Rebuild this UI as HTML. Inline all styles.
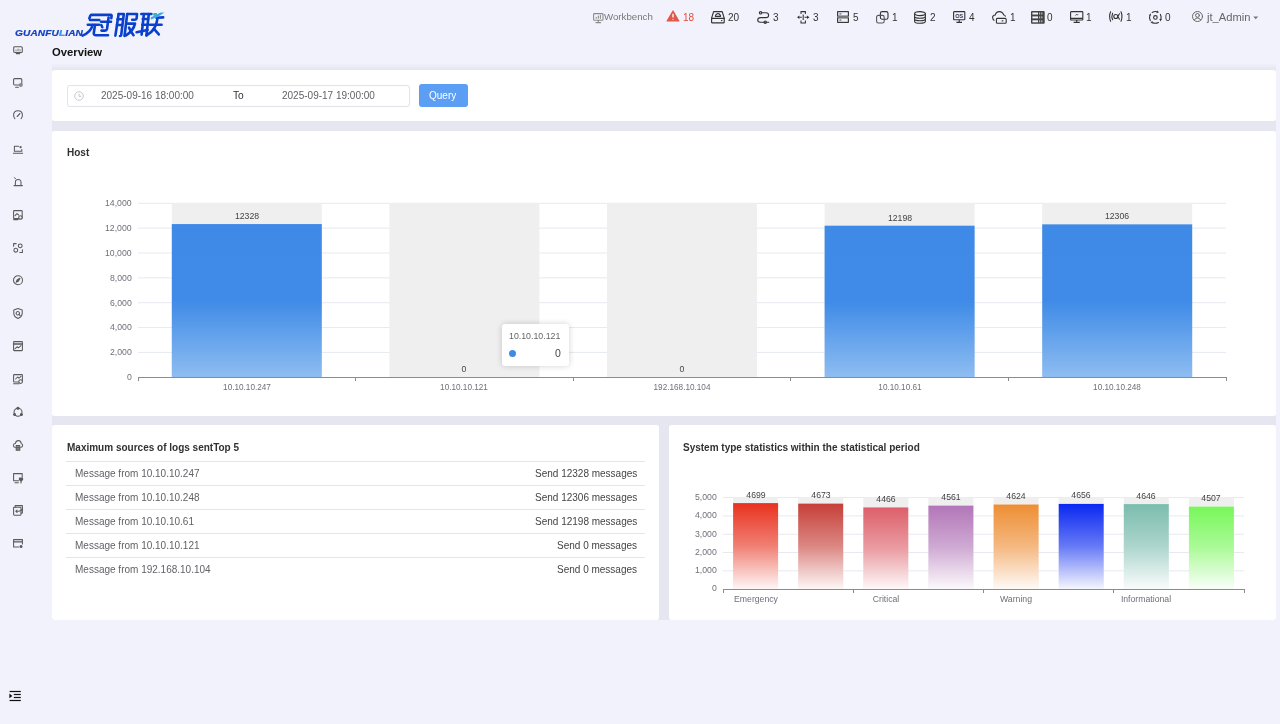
<!DOCTYPE html><html><head><meta charset="utf-8"><style>
html,body{margin:0;padding:0;width:1280px;height:724px;overflow:hidden;background:#f2f2fc;font-family:"Liberation Sans",sans-serif;}
.a{position:absolute;}
.t{position:absolute;white-space:nowrap;line-height:1;will-change:transform;}
svg{position:absolute;overflow:visible;}
</style></head><body>
<div class="t" style="left:15px;top:28.6px;font-size:8.8px;font-weight:bold;font-style:italic;color:#1442c2;transform-origin:0 0;transform:scaleX(1.15);letter-spacing:0.1px;-webkit-text-stroke:0.2px #1442c2">GUANFU<span style="color:#3aa2f2">L</span>IAN</div>
<svg style="left:0;top:0" width="180" height="45" viewBox="0 0 180 45">
<g fill="none" stroke="#0a40cc" stroke-width="2.6" stroke-linecap="round" stroke-linejoin="round">
<path d="M89.3 18.4 L90.4 15.6 Q90.8 14.9 91.8 14.9 L110.8 14.9 Q111.8 14.9 111.6 16 L111.3 18.2"/>
<path d="M90 20 L99.3 20"/><path d="M87.8 24.8 L99 24.8"/>
<path d="M92.6 25 Q91 32 82.5 35.6"/>
<path d="M95 25 L93.8 33 Q93.6 35.2 96 35.2 L108 35.2"/>
<path d="M101 21.7 L111 21.7"/><path d="M108.6 17.5 L107 29 Q106.6 30.6 105 30.6 L101.5 30.6"/><path d="M101.3 25 L102.3 27.2"/>
<path d="M118.6 14 L115.4 35.6"/><path d="M118.6 14 L123.8 14 L121.2 35.2 Q121 36 120 36"/><path d="M117.6 19.3 L122.8 19.3"/><path d="M117 25 L122 25"/>
<path d="M127.2 14 L124.5 36"/><path d="M127.2 14 L137 14 L136.6 18.5 Q136.5 19.8 135 19.8 L132.2 19.8"/>
<path d="M127.6 23.6 L135 23.6 Q133.5 30.5 126 35.4"/><path d="M129 27.6 Q131 32 133.5 35.2"/>
<path d="M141.3 14 L151.4 14"/><path d="M143.9 14 L141.6 34.6"/><path d="M148.8 14 L146.4 35.4"/><path d="M142.8 19 L148.2 19"/><path d="M142.3 24.8 L147.6 24.8"/><path d="M136.6 32.2 L147.6 30"/>
<path d="M149.8 24.8 L161.6 24.8"/><path d="M157.3 19.5 Q156 30 146.6 35.4"/><path d="M153.8 28.6 L158.8 34.4"/><path d="M156.6 17.8 L163.2 17.4"/>
</g>
<path d="M153.4 13 L157 13 L156.6 15.8 L153.2 15.8 Z" fill="#2bbf8c"/>
<path d="M150.6 17.4 L160.5 12.6 L164.5 12.6 Q158 17.8 151 19.5 Z" fill="#3aa8f0"/>
</svg>
<svg style="left:592.5px;top:13.0px" width="11" height="11" viewBox="0 0 11 11"><g fill="none" stroke="#8a8a8a" stroke-width="1.1" stroke-linecap="round" stroke-linejoin="round"><rect x="0.6" y="0.6" width="9.4" height="6.6" rx="0.8"/><path d="M3 9.6 L7.6 9.6 M5.3 7.2 L5.3 9.6 M3.2 5.3 L3.2 4.3 M5.3 5.3 L5.3 3 M7.4 5.3 L7.4 2.4"/></g></svg>
<div class="t" style="left:604.2px;top:12.4px;font-size:9.70px;color:#777;font-weight:normal;">Workbench</div>
<svg style="left:665.5px;top:10px" width="14" height="12" viewBox="0 0 14 12"><path d="M6.6 0.6 Q7 0 7.4 0.6 L13.5 11 Q13.7 11.6 13 11.6 L1 11.6 Q0.3 11.6 0.5 11 Z" fill="#e0574b"/><path d="M7 3.8 L7 7.6 M7 9.1 L7 9.8" stroke="#fff" stroke-width="1.3"/></svg>
<div class="t" style="left:683.0px;top:12.5px;font-size:10.00px;color:#e8483b;font-weight:normal;">18</div>
<svg style="left:711.0px;top:10.8px" width="14" height="13" viewBox="0 0 14 13"><g fill="none" stroke="#333" stroke-width="1.15" stroke-linecap="round" stroke-linejoin="round"><path d="M2.6 0.6 L11.2 0.6 L13.2 7.2 L13.2 11.3 Q13.2 11.8 12.7 11.8 L1.1 11.8 Q0.6 11.8 0.6 11.3 L0.6 7.2 Z"/><path d="M0.6 7.4 L13.2 7.4"/><path d="M4.4 5.3 Q4.4 3.5 5.6 3.5 Q6.2 2.2 7.4 2.6 Q8.4 2.6 8.6 3.6 Q9.6 3.8 9.6 5.3 Z"/><path d="M10.6 9.6 L10.8 9.6" stroke-width="1.4"/></g></svg>
<div class="t" style="left:727.6px;top:12.5px;font-size:10.00px;color:#333;font-weight:normal;">20</div>
<svg style="left:757.0px;top:11.0px" width="13" height="13" viewBox="0 0 13 13"><g fill="none" stroke="#333" stroke-width="1.1" stroke-linecap="round" stroke-linejoin="round"><circle cx="3.6" cy="1.8" r="1.2"/><path d="M4.8 1.8 L9 1.8 Q11.6 1.8 11.6 4.2 Q11.6 6.6 9 6.6 L3.6 6.6 Q0.7 6.6 0.7 9 Q0.7 11.2 3.4 11.2 L11.8 11.2"/><circle cx="8.2" cy="11.2" r="1.2"/></g></svg>
<div class="t" style="left:773.0px;top:12.5px;font-size:10.00px;color:#333;font-weight:normal;">3</div>
<svg style="left:797px;top:10.5px" width="13" height="13" viewBox="0 0 13 13"><g fill="none" stroke="#333" stroke-width="1.05"><path d="M4 3 L4 0.6 L8.4 0.6 L8.4 3 M4 9.6 L4 12 L8.4 12 L8.4 9.6 M6.2 3.6 L6.2 9"/><path d="M2.2 6.3 L4.8 6.3 M7.6 6.3 L10.2 6.3"/></g><path d="M0 6.3 L2.4 4.6 L2.4 8 Z M12.4 6.3 L10 4.6 L10 8 Z" fill="#333"/></svg>
<div class="t" style="left:813.2px;top:12.5px;font-size:10.00px;color:#333;font-weight:normal;">3</div>
<svg style="left:837px;top:11px" width="12" height="12" viewBox="0 0 12 12"><rect x="0" y="0" width="12" height="12" rx="0.8" fill="#3a3a3a"/><rect x="1.2" y="1.2" width="9.6" height="3.4" fill="#f2f2fc"/><rect x="1.2" y="7.4" width="9.6" height="3.4" fill="#f2f2fc"/><rect x="0" y="5.2" width="12" height="1.6" fill="#8a8a8a"/><path d="M2.4 2.9 L4.4 2.9 M2.4 9.1 L4.4 9.1" stroke="#333" stroke-width="0.9"/></svg>
<div class="t" style="left:853.2px;top:12.5px;font-size:10.00px;color:#333;font-weight:normal;">5</div>
<svg style="left:875.5px;top:11px" width="13" height="13" viewBox="0 0 13 13"><g fill="none" stroke-width="1.1"><rect x="4.4" y="0.6" width="7.6" height="7.6" rx="1.8" stroke="#333"/><rect x="0.6" y="4.4" width="7.6" height="7.6" rx="1.8" stroke="#555"/></g></svg>
<div class="t" style="left:892.3px;top:12.5px;font-size:10.00px;color:#333;font-weight:normal;">1</div>
<svg style="left:913.8px;top:11px" width="12" height="13" viewBox="0 0 12 13"><g fill="none" stroke="#333" stroke-width="1.1"><ellipse cx="6" cy="2.6" rx="5.4" ry="2"/><path d="M0.6 2.6 L0.6 10.2 Q0.6 12.3 6 12.3 Q11.4 12.3 11.4 10.2 L11.4 2.6 M0.6 5.2 Q0.6 7.2 6 7.2 Q11.4 7.2 11.4 5.2 M0.6 7.8 Q0.6 9.8 6 9.8 Q11.4 9.8 11.4 7.8"/></g></svg>
<div class="t" style="left:929.5px;top:12.5px;font-size:10.00px;color:#333;font-weight:normal;">2</div>
<svg style="left:953px;top:11px" width="13" height="12" viewBox="0 0 13 12"><g fill="none" stroke="#333" stroke-width="1.1"><rect x="0.6" y="0.6" width="11.2" height="8.2" rx="0.6"/><path d="M6.2 8.8 L6.2 11.2 M3.4 11.4 L9 11.4"/></g><text x="6.2" y="6.6" font-size="5.4" font-weight="bold" text-anchor="middle" fill="#333" font-family="Liberation Sans">OS</text></svg>
<div class="t" style="left:968.7px;top:12.5px;font-size:10.00px;color:#333;font-weight:normal;">4</div>
<svg style="left:991.6px;top:10.6px" width="15" height="13" viewBox="0 0 15 13"><g fill="none" stroke="#333" stroke-width="1.1"><path d="M2.4 9.4 Q0.6 8.6 0.6 6.6 Q0.6 4.2 3.2 4 Q4 0.6 7.4 0.6 Q10.6 0.6 11.6 3.8 Q13.2 4.4 13.6 5.6"/><rect x="4.4" y="7.4" width="9.8" height="4.9" rx="1"/></g><path d="M9.6 9.85 L11.4 9.85" stroke="#333" stroke-width="1.1"/></svg>
<div class="t" style="left:1009.6px;top:12.5px;font-size:10.00px;color:#333;font-weight:normal;">1</div>
<svg style="left:1031px;top:10.6px" width="14" height="13" viewBox="0 0 14 13"><rect x="0" y="0" width="13.7" height="12.8" rx="1" fill="#444"/><g fill="#f2f2fc"><rect x="1.4" y="1.5" width="5.6" height="2"/><rect x="1.4" y="5.4" width="5.6" height="2"/><rect x="1.4" y="9.3" width="5.6" height="2"/></g><g fill="#bbb"><rect x="8" y="1.5" width="1.2" height="2"/><rect x="10.2" y="1.5" width="1.2" height="2"/><rect x="8" y="5.4" width="1.2" height="2"/><rect x="10.2" y="5.4" width="1.2" height="2"/><rect x="8" y="9.3" width="1.2" height="2"/><rect x="10.2" y="9.3" width="1.2" height="2"/></g></svg>
<div class="t" style="left:1047.3px;top:12.5px;font-size:10.00px;color:#333;font-weight:normal;">0</div>
<svg style="left:1069.7px;top:10.9px" width="14" height="12" viewBox="0 0 14 12"><g fill="none" stroke="#333" stroke-width="1.1"><rect x="0.6" y="0.6" width="12.2" height="8.4" rx="0.6"/><path d="M0.6 7.4 L12.8 7.4 M6.7 9 L6.7 11.2 M3.6 11.4 L9.8 11.4"/><path d="M5.2 4.6 L6.4 3.4 L7.2 4.2 L8.2 3" stroke-width="0.8"/></g></svg>
<div class="t" style="left:1086.4px;top:12.5px;font-size:10.00px;color:#333;font-weight:normal;">1</div>
<svg style="left:1108.8px;top:11.2px" width="14" height="12" viewBox="0 0 14 12"><g fill="none" stroke="#333" stroke-width="1.1" stroke-linecap="round"><path d="M1.6 0.8 Q-0.4 5.5 1.6 10.2 M3.6 2.2 Q2.2 5.5 3.6 8.8"/><path d="M12 0.8 Q14 5.5 12 10.2"/><circle cx="6.8" cy="5.5" r="2"/><path d="M8.8 5.5 L10.5 2.8 M8.8 5.5 L10.5 8.2"/></g></svg>
<div class="t" style="left:1126.0px;top:12.5px;font-size:10.00px;color:#333;font-weight:normal;">1</div>
<svg style="left:1148.8px;top:10.9px" width="13" height="13" viewBox="0 0 13 13"><g fill="none" stroke="#333" stroke-width="1.1" stroke-linecap="round"><path d="M3.2 1.4 Q5.6 0 8 0.7"/><path d="M11.4 3.4 Q12.8 6 11.8 8.6"/><path d="M9.4 11.4 Q6.6 12.9 3.8 11.8"/><path d="M1.3 9.6 Q0 6.8 0.9 4.4"/><circle cx="6.4" cy="6.4" r="1.8"/></g><g fill="#333"><path d="M8 -0.6 L10 1.2 L7.6 2.2 Z"/><path d="M12.8 8 L11.4 10.4 L10.4 8 Z"/><path d="M3.6 12.8 L1.4 11 L3.9 10.2 Z"/><path d="M0 4.4 L1.4 2.2 L2.2 4.6 Z"/></g></svg>
<div class="t" style="left:1165.3px;top:12.5px;font-size:10.00px;color:#333;font-weight:normal;">0</div>
<svg style="left:1192.3px;top:11.0px" width="11" height="11" viewBox="0 0 11 11"><g fill="none" stroke="#666" stroke-width="1" stroke-linecap="round" stroke-linejoin="round"><circle cx="5.5" cy="5.5" r="5"/><circle cx="5.5" cy="4.4" r="1.9"/><path d="M2.4 9 Q3.2 6.9 5.5 6.9 Q7.8 6.9 8.6 9"/></g></svg>
<div class="t" style="left:1207.2px;top:12.0px;font-size:11.20px;color:#666;font-weight:normal;">jt_Admin</div>
<svg style="left:1252.5px;top:16px" width="6" height="4" viewBox="0 0 6 4"><path d="M0.3 0.5 L5.2 0.5 L2.75 3.2 Z" fill="#777"/></svg>
<svg style="left:12.5px;top:46.2px" width="10" height="11" viewBox="0 0 10 11"><g fill="none" stroke="#5a5a5a" stroke-width="1.05" stroke-linecap="round" stroke-linejoin="round"><rect x="0.7" y="0.7" width="8.6" height="5.8" rx="1"/><path d="M3 5 L3 4 M5 5 L5 3 M7 5 L7 3.6" stroke-width="0.8"/><path d="M3.2 7.6 L6.8 7.6"/></g></svg>
<svg style="left:12.5px;top:78.0px" width="10" height="11" viewBox="0 0 10 11"><g fill="none" stroke="#5a5a5a" stroke-width="1.05" stroke-linecap="round" stroke-linejoin="round"><rect x="0.6" y="0.6" width="8.2" height="6.4" rx="1"/><path d="M2.6 9.2 L5.4 9.2"/><circle cx="7.8" cy="7" r="2" fill="#8a8a8a" stroke="none"/></g></svg>
<svg style="left:12.5px;top:110.0px" width="10" height="11" viewBox="0 0 10 11"><g fill="none" stroke="#5a5a5a" stroke-width="1.05" stroke-linecap="round" stroke-linejoin="round"><path d="M1.9 8.6 Q0.6 7.2 0.6 5.2 Q0.6 0.8 5 0.8 Q9.4 0.8 9.4 5.2 Q9.4 7.2 8.1 8.6"/><path d="M4.3 6.4 L6.8 3.6" stroke-width="1.3"/></g></svg>
<svg style="left:12.5px;top:145.0px" width="10" height="11" viewBox="0 0 10 11"><g fill="none" stroke="#5a5a5a" stroke-width="1.05" stroke-linecap="round" stroke-linejoin="round"><path d="M1.4 1.2 L1.4 6.2 L8.8 6.2 L8.8 4.6 M1.4 1.2 L5.6 1.2 M0.4 8.2 L9.6 8.2"/><circle cx="7.6" cy="2.2" r="1.1" fill="#5a5a5a" stroke="none"/></g></svg>
<svg style="left:12.5px;top:177.0px" width="10" height="11" viewBox="0 0 10 11"><g fill="none" stroke="#5a5a5a" stroke-width="1.05" stroke-linecap="round" stroke-linejoin="round"><path d="M2.4 8 L2.4 5.4 Q2.4 2.4 5.2 2.4 Q8 2.4 8 5.4 L8 8 M1 8.6 L9.4 8.6"/><path d="M2.6 1.6 L1.2 0.6" stroke-width="0.9"/></g></svg>
<svg style="left:12.5px;top:209.6px" width="10" height="11" viewBox="0 0 10 11"><g fill="none" stroke="#5a5a5a" stroke-width="1.05" stroke-linecap="round" stroke-linejoin="round"><rect x="0.6" y="0.6" width="8.6" height="8" rx="0.6"/><path d="M2 5.6 L4 3.6 L5.6 5"/><circle cx="7.4" cy="7.4" r="1.7" fill="#f2f2fc"/><path d="M0.6 9.6 L5 9.6"/></g></svg>
<svg style="left:12.5px;top:243.0px" width="10" height="11" viewBox="0 0 10 11"><g fill="none" stroke="#5a5a5a" stroke-width="1.05" stroke-linecap="round" stroke-linejoin="round"><path d="M0.6 3.2 L0.6 0.6 L3.2 0.6 M9.4 6.8 L9.4 9.4 L6.8 9.4"/><circle cx="7.2" cy="2.8" r="1.9"/><circle cx="2.8" cy="7.2" r="1.9"/></g></svg>
<svg style="left:12.5px;top:275.0px" width="10" height="11" viewBox="0 0 10 11"><g fill="none" stroke="#5a5a5a" stroke-width="1.05" stroke-linecap="round" stroke-linejoin="round"><circle cx="5" cy="5.3" r="4.5"/><path d="M6.9 3.3 L5.6 6 L3.1 7.3 L4.4 4.6 Z" fill="#5a5a5a"/></g></svg>
<svg style="left:12.5px;top:308.0px" width="10" height="11" viewBox="0 0 10 11"><g fill="none" stroke="#5a5a5a" stroke-width="1.05" stroke-linecap="round" stroke-linejoin="round"><path d="M5 0.6 L9.2 2 L9.2 5.6 Q8.8 9 5 10.4 Q1.2 9 0.8 5.6 L0.8 2 Z"/><circle cx="4.8" cy="5.2" r="1.7"/><path d="M6 6.4 L7.2 7.6"/></g></svg>
<svg style="left:12.5px;top:341.0px" width="10" height="11" viewBox="0 0 10 11"><g fill="none" stroke="#5a5a5a" stroke-width="1.05" stroke-linecap="round" stroke-linejoin="round"><rect x="0.6" y="0.6" width="8.8" height="9" rx="0.6"/><path d="M0.6 3 L9.4 3" stroke-width="1.4"/><path d="M1.8 8 L4 5.8 L5.4 6.8 L8 4.6"/></g></svg>
<svg style="left:12.5px;top:374.2px" width="10" height="11" viewBox="0 0 10 11"><g fill="none" stroke="#5a5a5a" stroke-width="1.05" stroke-linecap="round" stroke-linejoin="round"><rect x="0.6" y="0.6" width="8.8" height="7.4" rx="0.6"/><path d="M2.6 5 L4.6 3 L6 4.2 L8 2.4"/><path d="M0.6 9.8 L6 9.8"/><circle cx="7.6" cy="7.6" r="1.8" fill="#f2f2fc"/></g></svg>
<svg style="left:12.5px;top:406.8px" width="10" height="11" viewBox="0 0 10 11"><g fill="none" stroke="#5a5a5a" stroke-width="1.05" stroke-linecap="round" stroke-linejoin="round"><circle cx="5" cy="5.2" r="4"/><circle cx="5" cy="1.2" r="1" fill="#5a5a5a"/><circle cx="1.6" cy="7.4" r="1" fill="#5a5a5a"/><circle cx="8.4" cy="7.4" r="1" fill="#5a5a5a"/></g></svg>
<svg style="left:12.5px;top:439.6px" width="10" height="11" viewBox="0 0 10 11"><g fill="none" stroke="#5a5a5a" stroke-width="1.05" stroke-linecap="round" stroke-linejoin="round"><path d="M2.4 7.4 Q0.4 7.2 0.4 5.2 Q0.6 3.4 2.4 3.4 Q3 0.6 5.4 0.6 Q8 0.8 8.2 3.4 Q9.8 3.8 9.6 5.6 Q9.4 7.2 7.8 7.4"/><path d="M3.2 5.4 L6.8 5.4 L6.8 10.2 L3.2 10.2 Z M3.2 7.8 L6.8 7.8" fill="#8a8a8a"/></g></svg>
<svg style="left:12.5px;top:472.6px" width="10" height="11" viewBox="0 0 10 11"><g fill="none" stroke="#5a5a5a" stroke-width="1.05" stroke-linecap="round" stroke-linejoin="round"><path d="M9.2 4 L9.2 0.6 L0.6 0.6 L0.6 7.8 L5.6 7.8 M2 9.8 L5.4 9.8"/><path d="M6.4 5 L9.6 5 L9.6 6.6 L8.4 8 L7.6 8 L6.4 6.6 Z M8 8 L8 10" fill="#5a5a5a"/></g></svg>
<svg style="left:12.5px;top:505.0px" width="10" height="11" viewBox="0 0 10 11"><g fill="none" stroke="#5a5a5a" stroke-width="1.05" stroke-linecap="round" stroke-linejoin="round"><path d="M2.2 2.2 L2.2 0.6 L9.4 0.6 L9.4 8 L8 8"/><rect x="0.6" y="2.2" width="7.4" height="8" rx="0.6"/><path d="M5.6 6.2 L2.8 6.2 M4 5 L2.8 6.2 L4 7.4 M5.6 6.2 Q8 6.2 9.6 4.2"/></g></svg>
<svg style="left:12.5px;top:539.0px" width="10" height="11" viewBox="0 0 10 11"><g fill="none" stroke="#5a5a5a" stroke-width="1.05" stroke-linecap="round" stroke-linejoin="round"><path d="M9.4 5 L9.4 0.6 L0.6 0.6 L0.6 8 L5.6 8"/><path d="M0.6 2.8 L9.4 2.8" stroke-width="1.2"/><circle cx="8" cy="7.4" r="1.5" fill="#5a5a5a" stroke="none"/></g></svg>
<svg style="left:0;top:0" width="40" height="724"><g fill="#111"><rect x="9.6" y="690.9" width="11.2" height="1.2"/><rect x="13.8" y="693.9" width="7" height="1.2"/><rect x="13.8" y="696.9" width="7" height="1.2"/><rect x="9.6" y="699.9" width="11.2" height="1.2"/><path d="M9.4 693.5 L12.4 695.9 L9.4 698.3 Z"/></g></svg>
<div class="t" style="left:52.0px;top:46.5px;font-size:11.25px;color:#111;font-weight:bold;">Overview</div>
<div class="a" style="left:52px;top:61px;width:1223.5px;height:559px;background:linear-gradient(to bottom,#f2f2fc 0px,#f2f2fc 2px,#e6e6f1 8.5px);overflow:hidden;">
<div class="a" style="left:0px;top:8.5px;width:1223.5px;height:51.5px;background:#fff;border-radius:2.5px;"></div>
<div class="a" style="left:0px;top:69.5px;width:1223.5px;height:285.3px;background:#fff;border-radius:2.5px;"></div>
<div class="a" style="left:0px;top:364px;width:607px;height:195px;background:#fff;border-radius:2.5px;"></div>
<div class="a" style="left:617px;top:364px;width:606.5px;height:195px;background:#fff;border-radius:2.5px;"></div>
</div>
<div class="a" style="left:66.5px;top:84.5px;width:341.5px;height:20.5px;border:1px solid #e1e3e8;border-radius:3px;background:#fff"></div>
<svg style="left:74px;top:90.5px" width="10" height="10" viewBox="0 0 10 10"><g fill="none" stroke="#c0c4cc" stroke-width="0.9"><circle cx="5" cy="5" r="4.3"/><path d="M5 2.5 L5 5.3 L7.3 5.3"/></g></svg>
<div class="t" style="left:101.3px;top:90.7px;font-size:10.00px;color:#606266;font-weight:normal;">2025-09-16 18:00:00</div>
<div class="t" style="left:233.0px;top:90.7px;font-size:10.20px;color:#303133;font-weight:normal;">To</div>
<div class="t" style="left:282.2px;top:90.7px;font-size:10.00px;color:#606266;font-weight:normal;">2025-09-17 19:00:00</div>
<div class="a" style="left:418.5px;top:84px;width:49.5px;height:22.5px;background:#5b9ef4;border-radius:3px"></div>
<div class="t" style="left:429.3px;top:90.6px;font-size:10.00px;color:#fff;font-weight:normal;">Query</div>
<div class="t" style="left:66.5px;top:147.5px;font-size:10.00px;color:#303133;font-weight:bold;">Host</div>
<svg style="left:0;top:0" width="1280" height="724"><rect x="138" y="202.80" width="1088" height="1" fill="#e6e9f0"/><rect x="138" y="227.65" width="1088" height="1" fill="#e6e9f0"/><rect x="138" y="252.50" width="1088" height="1" fill="#e6e9f0"/><rect x="138" y="277.35" width="1088" height="1" fill="#e6e9f0"/><rect x="138" y="302.20" width="1088" height="1" fill="#e6e9f0"/><rect x="138" y="327.05" width="1088" height="1" fill="#e6e9f0"/><rect x="138" y="351.90" width="1088" height="1" fill="#e6e9f0"/><defs><linearGradient id="g1" x1="0" y1="0" x2="0" y2="1"><stop offset="0" stop-color="#3f8ae6"/><stop offset="0.5" stop-color="#3f8be7"/><stop offset="1" stop-color="#8ebdf1"/></linearGradient></defs><rect x="171.8" y="203.30" width="150" height="173.95" fill="#efefef"/><rect x="171.8" y="224.07" width="150" height="153.18" fill="url(#g1)"/><rect x="389.4" y="203.30" width="150" height="173.95" fill="#efefef"/><rect x="607.0" y="203.30" width="150" height="173.95" fill="#efefef"/><rect x="824.6" y="203.30" width="150" height="173.95" fill="#efefef"/><rect x="824.6" y="225.69" width="150" height="151.56" fill="url(#g1)"/><rect x="1042.2" y="203.30" width="150" height="173.95" fill="#efefef"/><rect x="1042.2" y="224.35" width="150" height="152.90" fill="url(#g1)"/><rect x="138" y="377" width="1088" height="1" fill="#8c8c8c"/><rect x="138" y="377" width="1" height="4" fill="#8c8c8c"/><rect x="355" y="377" width="1" height="4" fill="#8c8c8c"/><rect x="573" y="377" width="1" height="4" fill="#8c8c8c"/><rect x="790" y="377" width="1" height="4" fill="#8c8c8c"/><rect x="1008" y="377" width="1" height="4" fill="#8c8c8c"/><rect x="1226" y="377" width="1" height="4" fill="#8c8c8c"/></svg>
<div class="t" style="right:1148px;top:199.1px;font-size:8.7px;color:#6e7079">14,000</div>
<div class="t" style="right:1148px;top:224.0px;font-size:8.7px;color:#6e7079">12,000</div>
<div class="t" style="right:1148px;top:248.8px;font-size:8.7px;color:#6e7079">10,000</div>
<div class="t" style="right:1148px;top:273.7px;font-size:8.7px;color:#6e7079">8,000</div>
<div class="t" style="right:1148px;top:298.5px;font-size:8.7px;color:#6e7079">6,000</div>
<div class="t" style="right:1148px;top:323.4px;font-size:8.7px;color:#6e7079">4,000</div>
<div class="t" style="right:1148px;top:348.2px;font-size:8.7px;color:#6e7079">2,000</div>
<div class="t" style="right:1148px;top:373.1px;font-size:8.7px;color:#6e7079">0</div>
<div class="t" style="left:196.8px;top:211.9px;width:100px;text-align:center;font-size:8.7px;color:#444">12328</div>
<div class="t" style="left:186.8px;top:383.6px;width:120px;text-align:center;font-size:8.2px;color:#6e7079">10.10.10.247</div>
<div class="t" style="left:414.4px;top:365.1px;width:100px;text-align:center;font-size:8.7px;color:#444">0</div>
<div class="t" style="left:404.4px;top:383.6px;width:120px;text-align:center;font-size:8.2px;color:#6e7079">10.10.10.121</div>
<div class="t" style="left:632.0px;top:365.1px;width:100px;text-align:center;font-size:8.7px;color:#444">0</div>
<div class="t" style="left:622.0px;top:383.6px;width:120px;text-align:center;font-size:8.2px;color:#6e7079">192.168.10.104</div>
<div class="t" style="left:849.6px;top:213.5px;width:100px;text-align:center;font-size:8.7px;color:#444">12198</div>
<div class="t" style="left:839.6px;top:383.6px;width:120px;text-align:center;font-size:8.2px;color:#6e7079">10.10.10.61</div>
<div class="t" style="left:1067.2px;top:212.1px;width:100px;text-align:center;font-size:8.7px;color:#444">12306</div>
<div class="t" style="left:1057.2px;top:383.6px;width:120px;text-align:center;font-size:8.2px;color:#6e7079">10.10.10.248</div>
<div class="a" style="left:501.5px;top:323.5px;width:67px;height:42.5px;background:#fff;border-radius:3px;box-shadow:0 0 6px rgba(0,0,0,0.18)"></div>
<div class="t" style="left:509.0px;top:331.5px;font-size:8.80px;color:#666;font-weight:normal;">10.10.10.121</div>
<div class="a" style="left:509px;top:349.5px;width:7px;height:7px;border-radius:50%;background:#3e8be6"></div>
<div class="t" style="left:555.0px;top:347.5px;font-size:10.50px;color:#464646;font-weight:normal;">0</div>
<div class="t" style="left:66.5px;top:443.0px;font-size:10.00px;color:#303133;font-weight:bold;">Maximum sources of logs sentTop 5</div>
<div class="a" style="left:66px;top:461px;width:579px;height:1.2px;background:#e5e5e7"></div>
<div class="t" style="left:75.0px;top:469.0px;font-size:10.00px;color:#606266;font-weight:normal;">Message from 10.10.10.247</div>
<div class="t" style="right:643px;top:469px;font-size:10px;color:#444">Send 12328 messages</div>
<div class="a" style="left:66px;top:485px;width:579px;height:1.2px;background:#e5e5e7"></div>
<div class="t" style="left:75.0px;top:493.0px;font-size:10.00px;color:#606266;font-weight:normal;">Message from 10.10.10.248</div>
<div class="t" style="right:643px;top:493px;font-size:10px;color:#444">Send 12306 messages</div>
<div class="a" style="left:66px;top:509px;width:579px;height:1.2px;background:#e5e5e7"></div>
<div class="t" style="left:75.0px;top:517.0px;font-size:10.00px;color:#606266;font-weight:normal;">Message from 10.10.10.61</div>
<div class="t" style="right:643px;top:517px;font-size:10px;color:#444">Send 12198 messages</div>
<div class="a" style="left:66px;top:533px;width:579px;height:1.2px;background:#e5e5e7"></div>
<div class="t" style="left:75.0px;top:541.0px;font-size:10.00px;color:#606266;font-weight:normal;">Message from 10.10.10.121</div>
<div class="t" style="right:643px;top:541px;font-size:10px;color:#444">Send 0 messages</div>
<div class="a" style="left:66px;top:557px;width:579px;height:1.2px;background:#e5e5e7"></div>
<div class="t" style="left:75.0px;top:565.0px;font-size:10.00px;color:#606266;font-weight:normal;">Message from 192.168.10.104</div>
<div class="t" style="right:643px;top:565px;font-size:10px;color:#444">Send 0 messages</div>
<div class="t" style="left:683.0px;top:443.0px;font-size:10.00px;color:#303133;font-weight:bold;">System type statistics within the statistical period</div>
<svg style="left:0;top:0" width="1280" height="724"><rect x="723" y="497.10" width="521" height="1" fill="#e6e9f0"/><rect x="723" y="515.41" width="521" height="1" fill="#e6e9f0"/><rect x="723" y="533.72" width="521" height="1" fill="#e6e9f0"/><rect x="723" y="552.03" width="521" height="1" fill="#e6e9f0"/><rect x="723" y="570.34" width="521" height="1" fill="#e6e9f0"/><defs><linearGradient id="h0" x1="0" y1="0" x2="0" y2="1"><stop offset="0" stop-color="#e8321f"/><stop offset="0.5" stop-color="#e8321f" stop-opacity="0.62"/><stop offset="1" stop-color="#e8321f" stop-opacity="0.04"/></linearGradient><linearGradient id="h1" x1="0" y1="0" x2="0" y2="1"><stop offset="0" stop-color="#c63f38"/><stop offset="0.5" stop-color="#c63f38" stop-opacity="0.62"/><stop offset="1" stop-color="#c63f38" stop-opacity="0.04"/></linearGradient><linearGradient id="h2" x1="0" y1="0" x2="0" y2="1"><stop offset="0" stop-color="#dd5f69"/><stop offset="0.5" stop-color="#dd5f69" stop-opacity="0.62"/><stop offset="1" stop-color="#dd5f69" stop-opacity="0.04"/></linearGradient><linearGradient id="h3" x1="0" y1="0" x2="0" y2="1"><stop offset="0" stop-color="#b276b8"/><stop offset="0.5" stop-color="#b276b8" stop-opacity="0.62"/><stop offset="1" stop-color="#b276b8" stop-opacity="0.04"/></linearGradient><linearGradient id="h4" x1="0" y1="0" x2="0" y2="1"><stop offset="0" stop-color="#ee8e34"/><stop offset="0.5" stop-color="#ee8e34" stop-opacity="0.62"/><stop offset="1" stop-color="#ee8e34" stop-opacity="0.04"/></linearGradient><linearGradient id="h5" x1="0" y1="0" x2="0" y2="1"><stop offset="0" stop-color="#0a28f0"/><stop offset="0.5" stop-color="#0a28f0" stop-opacity="0.62"/><stop offset="1" stop-color="#0a28f0" stop-opacity="0.04"/></linearGradient><linearGradient id="h6" x1="0" y1="0" x2="0" y2="1"><stop offset="0" stop-color="#7bbcae"/><stop offset="0.5" stop-color="#7bbcae" stop-opacity="0.62"/><stop offset="1" stop-color="#7bbcae" stop-opacity="0.04"/></linearGradient><linearGradient id="h7" x1="0" y1="0" x2="0" y2="1"><stop offset="0" stop-color="#78f75a"/><stop offset="0.5" stop-color="#78f75a" stop-opacity="0.62"/><stop offset="1" stop-color="#78f75a" stop-opacity="0.04"/></linearGradient></defs><rect x="733.1" y="497.6" width="45" height="91.5" fill="#efefef"/><rect x="733.1" y="503.1" width="45" height="86.0" fill="#fff"/><rect x="733.1" y="503.1" width="45" height="86.0" fill="url(#h0)"/><rect x="798.2" y="497.6" width="45" height="91.5" fill="#efefef"/><rect x="798.2" y="503.6" width="45" height="85.6" fill="#fff"/><rect x="798.2" y="503.6" width="45" height="85.6" fill="url(#h1)"/><rect x="863.3" y="497.6" width="45" height="91.5" fill="#efefef"/><rect x="863.3" y="507.4" width="45" height="81.8" fill="#fff"/><rect x="863.3" y="507.4" width="45" height="81.8" fill="url(#h2)"/><rect x="928.4" y="497.6" width="45" height="91.5" fill="#efefef"/><rect x="928.4" y="505.6" width="45" height="83.5" fill="#fff"/><rect x="928.4" y="505.6" width="45" height="83.5" fill="url(#h3)"/><rect x="993.6" y="497.6" width="45" height="91.5" fill="#efefef"/><rect x="993.6" y="504.5" width="45" height="84.7" fill="#fff"/><rect x="993.6" y="504.5" width="45" height="84.7" fill="url(#h4)"/><rect x="1058.7" y="497.6" width="45" height="91.5" fill="#efefef"/><rect x="1058.7" y="503.9" width="45" height="85.3" fill="#fff"/><rect x="1058.7" y="503.9" width="45" height="85.3" fill="url(#h5)"/><rect x="1123.8" y="497.6" width="45" height="91.5" fill="#efefef"/><rect x="1123.8" y="504.1" width="45" height="85.1" fill="#fff"/><rect x="1123.8" y="504.1" width="45" height="85.1" fill="url(#h6)"/><rect x="1188.9" y="497.6" width="45" height="91.5" fill="#efefef"/><rect x="1188.9" y="506.6" width="45" height="82.5" fill="#fff"/><rect x="1188.9" y="506.6" width="45" height="82.5" fill="url(#h7)"/><rect x="723" y="589" width="521" height="1" fill="#8c8c8c"/><rect x="723" y="589" width="1" height="4" fill="#8c8c8c"/><rect x="853" y="589" width="1" height="4" fill="#8c8c8c"/><rect x="983" y="589" width="1" height="4" fill="#8c8c8c"/><rect x="1113" y="589" width="1" height="4" fill="#8c8c8c"/><rect x="1244" y="589" width="1" height="4" fill="#8c8c8c"/></svg>
<div class="t" style="right:563px;top:492.9px;font-size:8.7px;color:#6e7079">5,000</div>
<div class="t" style="right:563px;top:511.2px;font-size:8.7px;color:#6e7079">4,000</div>
<div class="t" style="right:563px;top:529.5px;font-size:8.7px;color:#6e7079">3,000</div>
<div class="t" style="right:563px;top:547.8px;font-size:8.7px;color:#6e7079">2,000</div>
<div class="t" style="right:563px;top:566.1px;font-size:8.7px;color:#6e7079">1,000</div>
<div class="t" style="right:563px;top:584.4px;font-size:8.7px;color:#6e7079">0</div>
<div class="t" style="left:725.6px;top:490.6px;width:60px;text-align:center;font-size:8.7px;color:#444">4699</div>
<div class="t" style="left:790.7px;top:491.1px;width:60px;text-align:center;font-size:8.7px;color:#444">4673</div>
<div class="t" style="left:855.8px;top:494.9px;width:60px;text-align:center;font-size:8.7px;color:#444">4466</div>
<div class="t" style="left:920.9px;top:493.1px;width:60px;text-align:center;font-size:8.7px;color:#444">4561</div>
<div class="t" style="left:986.1px;top:492.0px;width:60px;text-align:center;font-size:8.7px;color:#444">4624</div>
<div class="t" style="left:1051.2px;top:491.4px;width:60px;text-align:center;font-size:8.7px;color:#444">4656</div>
<div class="t" style="left:1116.3px;top:491.6px;width:60px;text-align:center;font-size:8.7px;color:#444">4646</div>
<div class="t" style="left:1181.4px;top:494.1px;width:60px;text-align:center;font-size:8.7px;color:#444">4507</div>
<div class="t" style="left:705.6px;top:594.5px;width:100px;text-align:center;font-size:8.7px;color:#6e7079">Emergency</div>
<div class="t" style="left:835.8px;top:594.5px;width:100px;text-align:center;font-size:8.7px;color:#6e7079">Critical</div>
<div class="t" style="left:966.1px;top:594.5px;width:100px;text-align:center;font-size:8.7px;color:#6e7079">Warning</div>
<div class="t" style="left:1096.3px;top:594.5px;width:100px;text-align:center;font-size:8.7px;color:#6e7079">Informational</div>
</body></html>
